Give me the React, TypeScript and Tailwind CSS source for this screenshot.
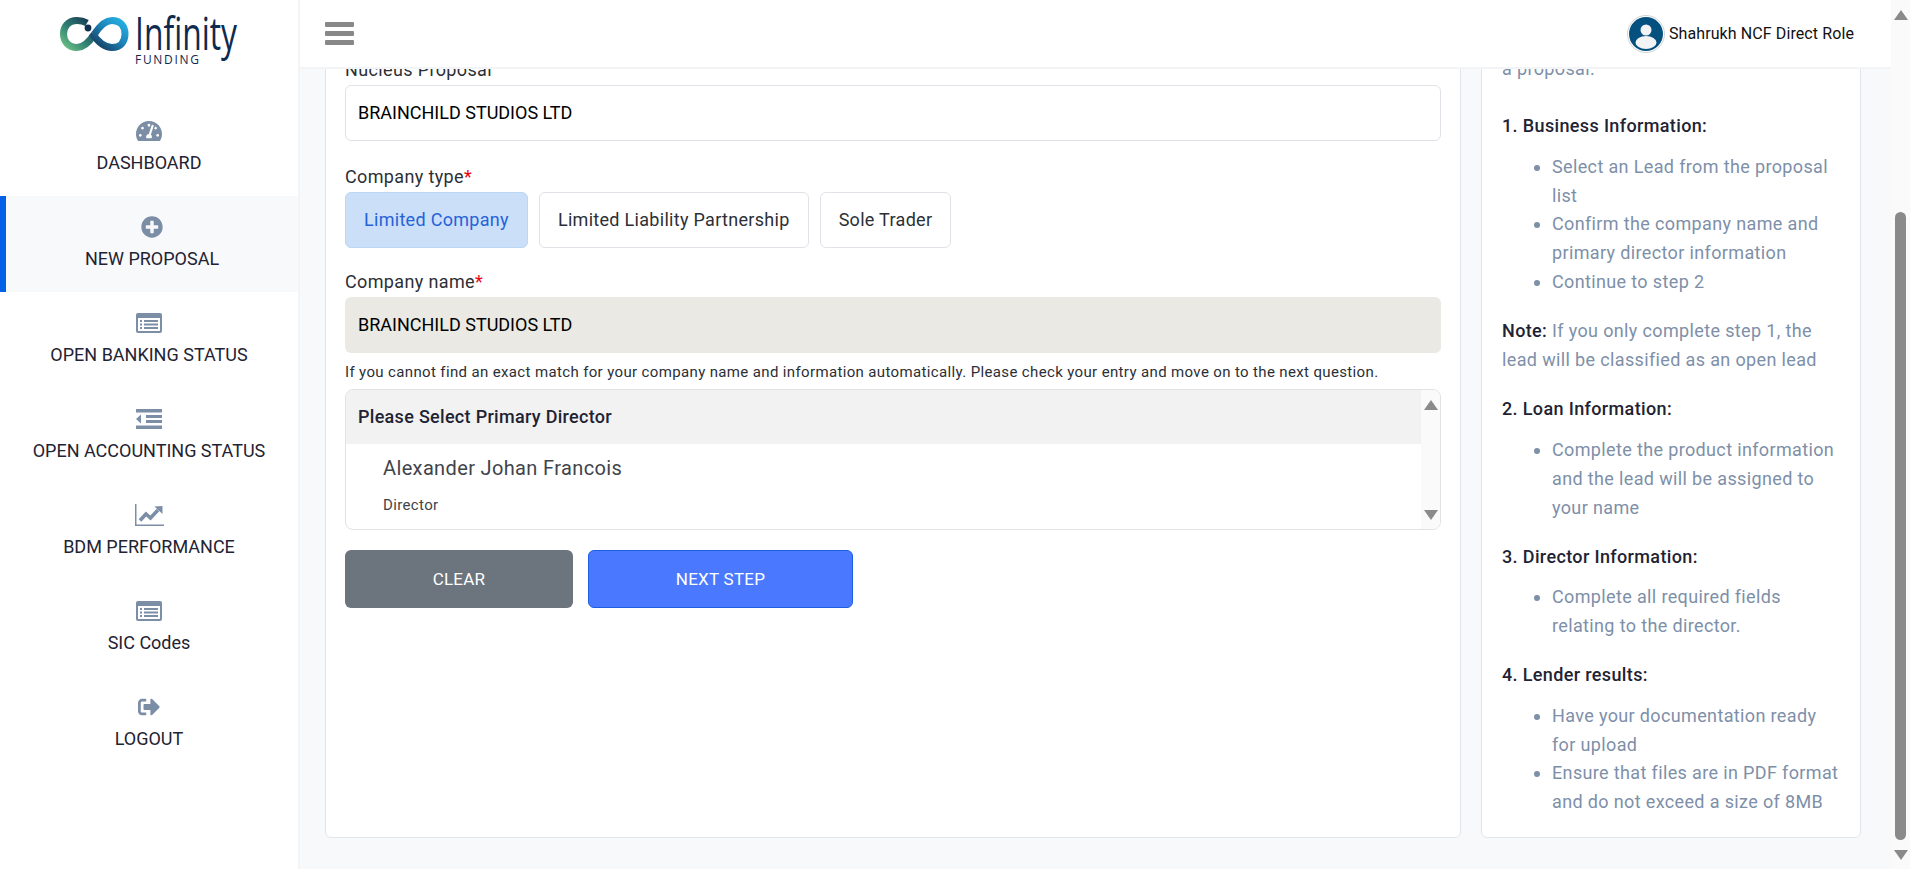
import { FaPlusCircle, FaSignOutAlt, FaTachometerAlt } from 'react-icons/fa';

const ListIcon = () => (
  <svg width="26" height="20" viewBox="0 0 26 20">
    <rect width="26" height="20" rx="2" fill="#7c8da6" />
    <rect x="2" y="5" width="22" height="13" fill="#ffffff" />
    <path d="M4 7h2v2H4zM8 7h14v2H8zM4 10.500h2v2H4zM8 10.500h14v2H8zM4 14h2v2H4zM8 14h14v2H8z" fill="#7c8da6" />
  </svg>
);

const OutdentIcon = () => (
  <svg width="26" height="20" viewBox="0 0 26 20" fill="#7c8da6">
    <path d="M0 0h26v3.500H0zM10 6h16v3H10zM10 11h16v3H10zM0 16.500h26V20H0zM5 5.500v9L0 10z" />
  </svg>
);

const ChartIcon = () => (
  <svg width="29" height="22" viewBox="0 0 29 22" fill="none">
    <path d="M.75 0v21.250H29" stroke="#7c8da6" strokeWidth="1.500" />
    <path d="M5 16.500l6-6.500 4.500 4L23 6" stroke="#7c8da6" strokeWidth="3.600" />
    <path d="M19.500 2.500L27.500 2v8z" fill="#7c8da6" />
  </svg>
);

const NAV_ITEMS = [
  { label: 'DASHBOARD', icon: <FaTachometerAlt size={26} /> },
  { label: 'NEW PROPOSAL', icon: <FaPlusCircle size={22} />, active: true },
  { label: 'OPEN BANKING STATUS', icon: <ListIcon /> },
  { label: 'OPEN ACCOUNTING STATUS', icon: <OutdentIcon /> },
  { label: 'BDM PERFORMANCE', icon: <ChartIcon /> },
  { label: 'SIC Codes', icon: <ListIcon /> },
  { label: 'LOGOUT', icon: <FaSignOutAlt size={22} /> },
];

const GUIDE = [
  {
    title: '1. Business Information:',
    items: ['Select an Lead from the proposal list', 'Confirm the company name and primary director information', 'Continue to step 2'],
  },
  {
    title: '2. Loan Information:',
    items: ['Complete the product information and the lead will be assigned to your name'],
  },
  {
    title: '3. Director Information:',
    items: ['Complete all required fields relating to the director.'],
  },
  {
    title: '4. Lender results:',
    items: ['Have your documentation ready for upload', 'Ensure that files are in PDF format and do not exceed a size of 8MB'],
  },
];

const Logo = () => (
  <svg width="190" height="54" viewBox="0 0 190 54">
    <defs>
      <linearGradient id="loopLeft" x1="0" y1="1" x2="1" y2="0">
        <stop offset="0" stopColor="#6cc183" />
        <stop offset="0.45" stopColor="#2f7f74" />
        <stop offset="1" stopColor="#14304f" />
      </linearGradient>
      <linearGradient id="loopRight" x1="0" y1="1" x2="1" y2="0">
        <stop offset="0" stopColor="#14304f" />
        <stop offset="0.55" stopColor="#1c84b8" />
        <stop offset="1" stopColor="#27b3e6" />
      </linearGradient>
    </defs>
    <path
      d="M27 8 C24 6.300 21 5.500 17 5.500 C8 5.500 3.500 12 3.500 19 C3.500 26 8 32.500 17 32.500 C23 32.500 28 29 34.500 19"
      fill="none"
      stroke="url(#loopLeft)"
      strokeWidth="7"
    />
    <path
      d="M34.500 19 C41 9 46 5.500 52 5.500 C61 5.500 65 12 65 19 C65 26 61 32.500 52 32.500 C45 32.500 38 27 32 18"
      fill="none"
      stroke="url(#loopRight)"
      strokeWidth="7"
    />
    <circle cx="28" cy="13" r="3.400" fill="#14304f" />
    <text x="75" y="35" fontFamily="Open Sans, sans-serif" fontSize="46" fontWeight="500" fill="#0f2a4f" textLength="102" lengthAdjust="spacingAndGlyphs">
      Infinity
    </text>
    <text x="75" y="49" fontFamily="Open Sans, sans-serif" fontSize="12" fontWeight="500" fill="#0f2a4f" textLength="64" lengthAdjust="spacing">
      FUNDING
    </text>
  </svg>
);

const Avatar = () => (
  <svg width="38" height="38" viewBox="0 0 38 38">
    <defs>
      <clipPath id="avatarClip">
        <circle cx="19" cy="19" r="17" />
      </clipPath>
    </defs>
    <circle cx="19" cy="19" r="18.500" fill="#ffffff" stroke="#cfd3d6" />
    <circle cx="19" cy="19" r="17" fill="#04517f" />
    <g clipPath="url(#avatarClip)" fill="#f1f3f4">
      <circle cx="19" cy="15" r="5.500" />
      <ellipse cx="19" cy="27.500" rx="10.500" ry="6.500" />
    </g>
  </svg>
);

const Arrow = ({ down }: { down?: boolean }) => (
  <svg width="14" height="10" viewBox="0 0 14 10" fill="#8a8a8a">
    <path d={down ? 'M0 0h14L7 10z' : 'M7 0l7 10H0z'} />
  </svg>
);

const Sidebar = () => (
  <aside className="w-[300px] shrink-0 bg-white border-r-2 border-[#f3f4f6] flex flex-col">
    <div className="h-[100px] pl-[60px] pt-[15px]">
      <Logo />
    </div>
    {NAV_ITEMS.map((item) => (
      <div
        key={item.label}
        className={`h-[96px] flex flex-col items-center pt-[19px] ${item.active ? 'bg-[#f8f9fb] border-l-[6px] border-[#0560e8]' : ''}`}
      >
        <div className="h-[24px] flex items-center justify-center text-[#7c8da6]">{item.icon}</div>
        <div className="mt-[8px] text-lg leading-6 text-[#1f2333]">{item.label}</div>
      </div>
    ))}
  </aside>
);

const Header = () => (
  <header className="h-[69px] shrink-0 bg-white border-b-2 border-[#f3f4f6] flex items-center justify-between pl-[25px] pr-[37px]">
    <div className="w-[29px] flex flex-col gap-[4px]">
      <div className="h-[5px] rounded-[1px] bg-[#888888]" />
      <div className="h-[5px] rounded-[1px] bg-[#888888]" />
      <div className="h-[5px] rounded-[1px] bg-[#888888]" />
    </div>
    <div className="flex items-center gap-[4px]">
      <Avatar />
      <span className="text-base tracking-[0.1px] text-[#111111]">Shahrukh NCF Direct Role</span>
    </div>
  </header>
);

const Section = ({ title, items }: { title: string; items: string[] }) => (
  <div className="mb-[20px] last:mb-0">
    <h3 className="mb-3 font-medium text-[#1f2333]">{title}</h3>
    <ul className="list-disc pl-[50px]">
      {items.map((item) => (
        <li key={item}>{item}</li>
      ))}
    </ul>
  </div>
);

const GuidePanel = () => (
  <div className="w-[380px] shrink-0 bg-white border border-[#e2e5ec] rounded-b-md px-[20px] pb-[20px] text-lg leading-[28.8px] tracking-[0.36px] text-[#7e8fa8]">
    <p className="mb-[28px]">
      Follow the steps below to complete
      <br />a proposal.
    </p>
    <Section {...GUIDE[0]} />
    <p className="mb-[21px]">
      <strong className="font-medium text-[#1f2333]">Note:</strong> If you only complete step 1, the lead will be classified as an open lead
    </p>
    <Section {...GUIDE[1]} />
    <Section {...GUIDE[2]} />
    <Section {...GUIDE[3]} />
  </div>
);

const ProposalForm = () => (
  <div className="flex-1 min-w-0 bg-white border border-[#e2e5ec] rounded-b-md flex flex-col justify-end px-[19px] pb-[229px] text-lg tracking-[0.36px] text-[#2c2f36]">
    <label className="block leading-6 mb-[3px]">Nucleus Proposal</label>
    <div className="h-[56px] flex items-center px-[12px] border border-[#dfe2e6] rounded-md tracking-normal text-black">BRAINCHILD STUDIOS LTD</div>

    <label className="block leading-6 mt-[24px] mb-[3px]">
      Company type<span className="text-red-600">*</span>
    </label>
    <div className="flex gap-[11px] tracking-[0.3px]">
      <button className="h-[56px] px-[18px] bg-[#cbdff8] border border-[#bcd6f4] rounded-md text-[#2563d8]">Limited Company</button>
      <button className="h-[56px] px-[18px] bg-white border border-[#dfe2e6] rounded-md">Limited Liability Partnership</button>
      <button className="h-[56px] px-[18px] bg-white border border-[#dfe2e6] rounded-md">Sole Trader</button>
    </div>

    <label className="block leading-6 mt-[22px] mb-[3px]">
      Company name<span className="text-red-600">*</span>
    </label>
    <div className="h-[56px] flex items-center px-[13px] bg-[#eae9e3] rounded-md tracking-normal text-black">BRAINCHILD STUDIOS LTD</div>
    <p className="mt-[9px] mb-[7px] text-[15px] leading-5">
      If you cannot find an exact match for your company name and information automatically. Please check your entry and move on to the next question.
    </p>

    <div className="h-[141px] flex border border-[#e0e2e5] rounded-lg overflow-hidden">
      <div className="flex-1 min-w-0">
        <div className="h-[54px] flex items-center px-[12px] bg-[#f2f2f2] font-medium tracking-[0.3px] text-[#1f2333]">Please Select Primary Director</div>
        <div className="pl-[37px] pt-[10px]">
          <div className="text-xl leading-7 text-[#3f444b]">Alexander Johan Francois</div>
          <div className="mt-[13px] text-[15px] leading-5 text-[#3f444b]">Director</div>
        </div>
      </div>
      <div className="w-[19px] bg-[#fafafa] flex flex-col items-center justify-between pt-[10px] pb-[9px]">
        <Arrow />
        <Arrow down />
      </div>
    </div>

    <div className="flex gap-[15px] mt-[20px]">
      <button className="w-[228px] h-[58px] bg-[#6c757d] rounded-md text-[17px] tracking-[0.25px] text-white">CLEAR</button>
      <button className="w-[265px] h-[58px] bg-[#4a79ff] border border-[#1d5fe0] rounded-md text-[17px] tracking-[0.25px] text-white">NEXT STEP</button>
    </div>
  </div>
);

const PageScrollbar = () => (
  <div className="w-[19px] shrink-0 bg-[#fafafa] flex flex-col items-center pt-[10px] pb-[9px]">
    <Arrow />
    <div className="w-[11px] mt-[192px] flex-1 bg-[#8a8a8a] rounded-full" />
    <div className="mt-[10px]">
      <Arrow down />
    </div>
  </div>
);

const App = () => (
  <div className="flex h-screen overflow-hidden bg-[#f8f9fb] font-['Roboto',sans-serif]">
    <Sidebar />
    <main className="flex-1 min-w-0 flex flex-col">
      <Header />
      {/* page is scrolled down: content is pinned to the bottom and clipped at the top */}
      <div className="flex-1 min-h-0 overflow-hidden flex flex-col justify-end pl-[25px] pr-[30px] pb-[31px]">
        <div className="flex gap-[20px] shrink-0">
          <ProposalForm />
          <GuidePanel />
        </div>
      </div>
    </main>
    <PageScrollbar />
  </div>
);

export default App;
